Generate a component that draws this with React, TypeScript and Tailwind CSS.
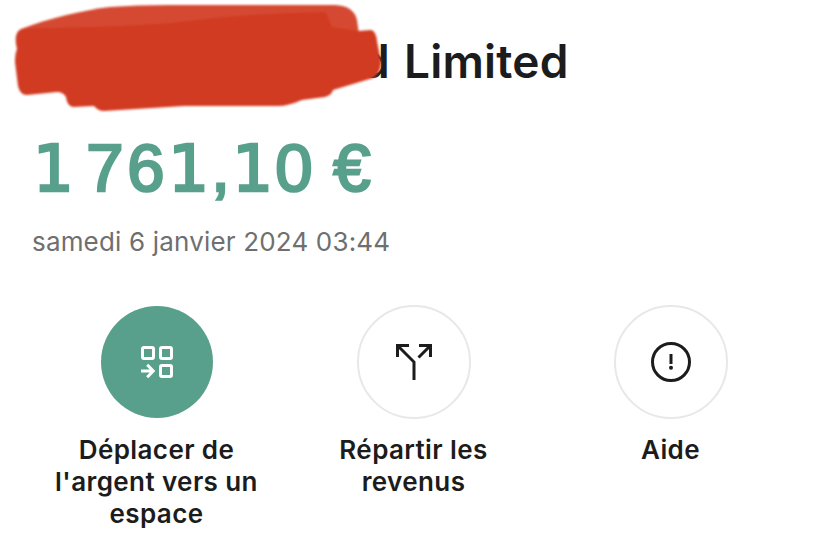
import type { ReactNode } from "react";

function Digit({ children, className }: { children: ReactNode; className: string }) {
  return <span className={`shrink-0 text-center [-webkit-text-stroke:2.6px_#58a08c] ${className}`}>{children}</span>;
}

function FootedOne({ className }: { className: string }) {
  return <Digit className={`font-['DejaVu_Sans'] text-[64px] ${className}`}>1</Digit>;
}

function Action({ label, filled, children }: { label: string[]; filled?: boolean; children: ReactNode }) {
  return (
    <button className="flex w-[257px] flex-col items-center">
      <span className="flex size-[114px] items-center justify-center">
        <span
          className={
            filled
              ? "flex size-28 items-center justify-center rounded-full bg-[#58a08c]"
              : "flex size-[114px] items-center justify-center rounded-full border-2 border-[#e8e8e8]"
          }
        >
          {children}
        </span>
      </span>
      <span className="mt-[15px] text-center text-[26px] leading-8 font-semibold tracking-[0.4px] text-[#1c1c1c]">
        {label.map((line) => (
          <span key={line} className="block whitespace-nowrap">{line}</span>
        ))}
      </span>
    </button>
  );
}

function Scribble() {
  return (
    <svg width="400" height="124" viewBox="0 0 400 124" className="absolute top-0 left-0">
      <defs>
        <filter id="soft" x="-5%" y="-5%" width="110%" height="110%">
          <feGaussianBlur stdDeviation="1" />
        </filter>
      </defs>
      <g filter="url(#soft)">
        <path
          fill="#d54a33"
          d="M21 29C50 18 84 10 110 7Q136 5 170 5H335Q354 6 357 20L359 34L320 50H40Z"
        />
        <path
          fill="#d13a22"
          d="M21 29C65 27 130 27 180 22C230 15 280 13 326 12L332 27L358 31L371 30Q376 31 377 41L381 62Q381 73 373 78L333 90Q332 95 325 97L302 100Q288 106 278 106L184 106L104 111Q98 111 94 106L73 107Q67 106 66 97Q63 92 57 92L27 95Q20 95 18 86L15 62Q15 54 17 49Q13 33 21 29Z"
        />
      </g>
    </svg>
  );
}

export default function App() {
  return (
    <main className="relative h-[554px] w-[827px] overflow-hidden bg-white font-['Inter',sans-serif]">
      <h1 className="flex h-[124px] items-start pt-[33px] pl-[361px] text-[46px] leading-[56px] font-semibold whitespace-nowrap text-[#1c1c1c]">
        <span className="w-[43px]">d</span>
        <span className="tracking-[0.2px]">Limited</span>
      </h1>
      <Scribble />
      <div className="-mt-px flex h-[90px] items-baseline pl-[33px] font-['Liberation_Sans',sans-serif] text-[67px] leading-[90px] text-[#58a08c]">
        <FootedOne className="w-[40px]" />
        <Digit className="ml-[12px] w-[40px]">7</Digit>
        <Digit className="w-[42px]">6</Digit>
        <FootedOne className="w-[43px]" />
        <Digit className="w-[21px]">,</Digit>
        <FootedOne className="w-[43px]" />
        <Digit className="w-[40px]">0</Digit>
        <Digit className="ml-[16px] w-[44px]">€</Digit>
      </div>
      <p className="mt-[13px] pl-8 text-[26px] leading-8 tracking-[0.17px] whitespace-nowrap text-[#6f6f6f]">samedi 6 janvier 2024 03:44</p>
      <nav className="mt-[47px] ml-[28px] flex items-start">
        <Action filled label={["Déplacer de", "l'argent vers un", "espace"]}>
          <svg width="36" height="36" viewBox="0 0 36 36" fill="none" stroke="#fff" strokeWidth="3">
            <rect x="3.5" y="3.5" width="11" height="11" rx="1.5" />
            <rect x="21.5" y="3.5" width="11" height="11" rx="1.5" />
            <rect x="21.5" y="21.5" width="11" height="11" rx="1.5" />
            <path d="M2 27H14M8.2 20.8L14.2 27L8.2 33.2" />
          </svg>
        </Action>
        <Action label={["Répartir les", "revenus"]}>
          <svg width="40" height="40" viewBox="0 0 40 40" fill="none" stroke="#1c1c1c" strokeWidth="3">
            <path d="M20 38V20L3.5 3.5M3.5 15V3.5H15M25 3.5H36.5V15M36.5 3.5L24.5 15.5" />
          </svg>
        </Action>
        <Action label={["Aide"]}>
          <svg width="40" height="40" viewBox="0 0 40 40" fill="none" stroke="#1c1c1c" strokeWidth="3">
            <circle cx="20" cy="20" r="18.5" />
            <path d="M20 12V22" />
            <circle cx="20" cy="25.7" r="2" fill="#1c1c1c" stroke="none" />
          </svg>
        </Action>
      </nav>
    </main>
  );
}
